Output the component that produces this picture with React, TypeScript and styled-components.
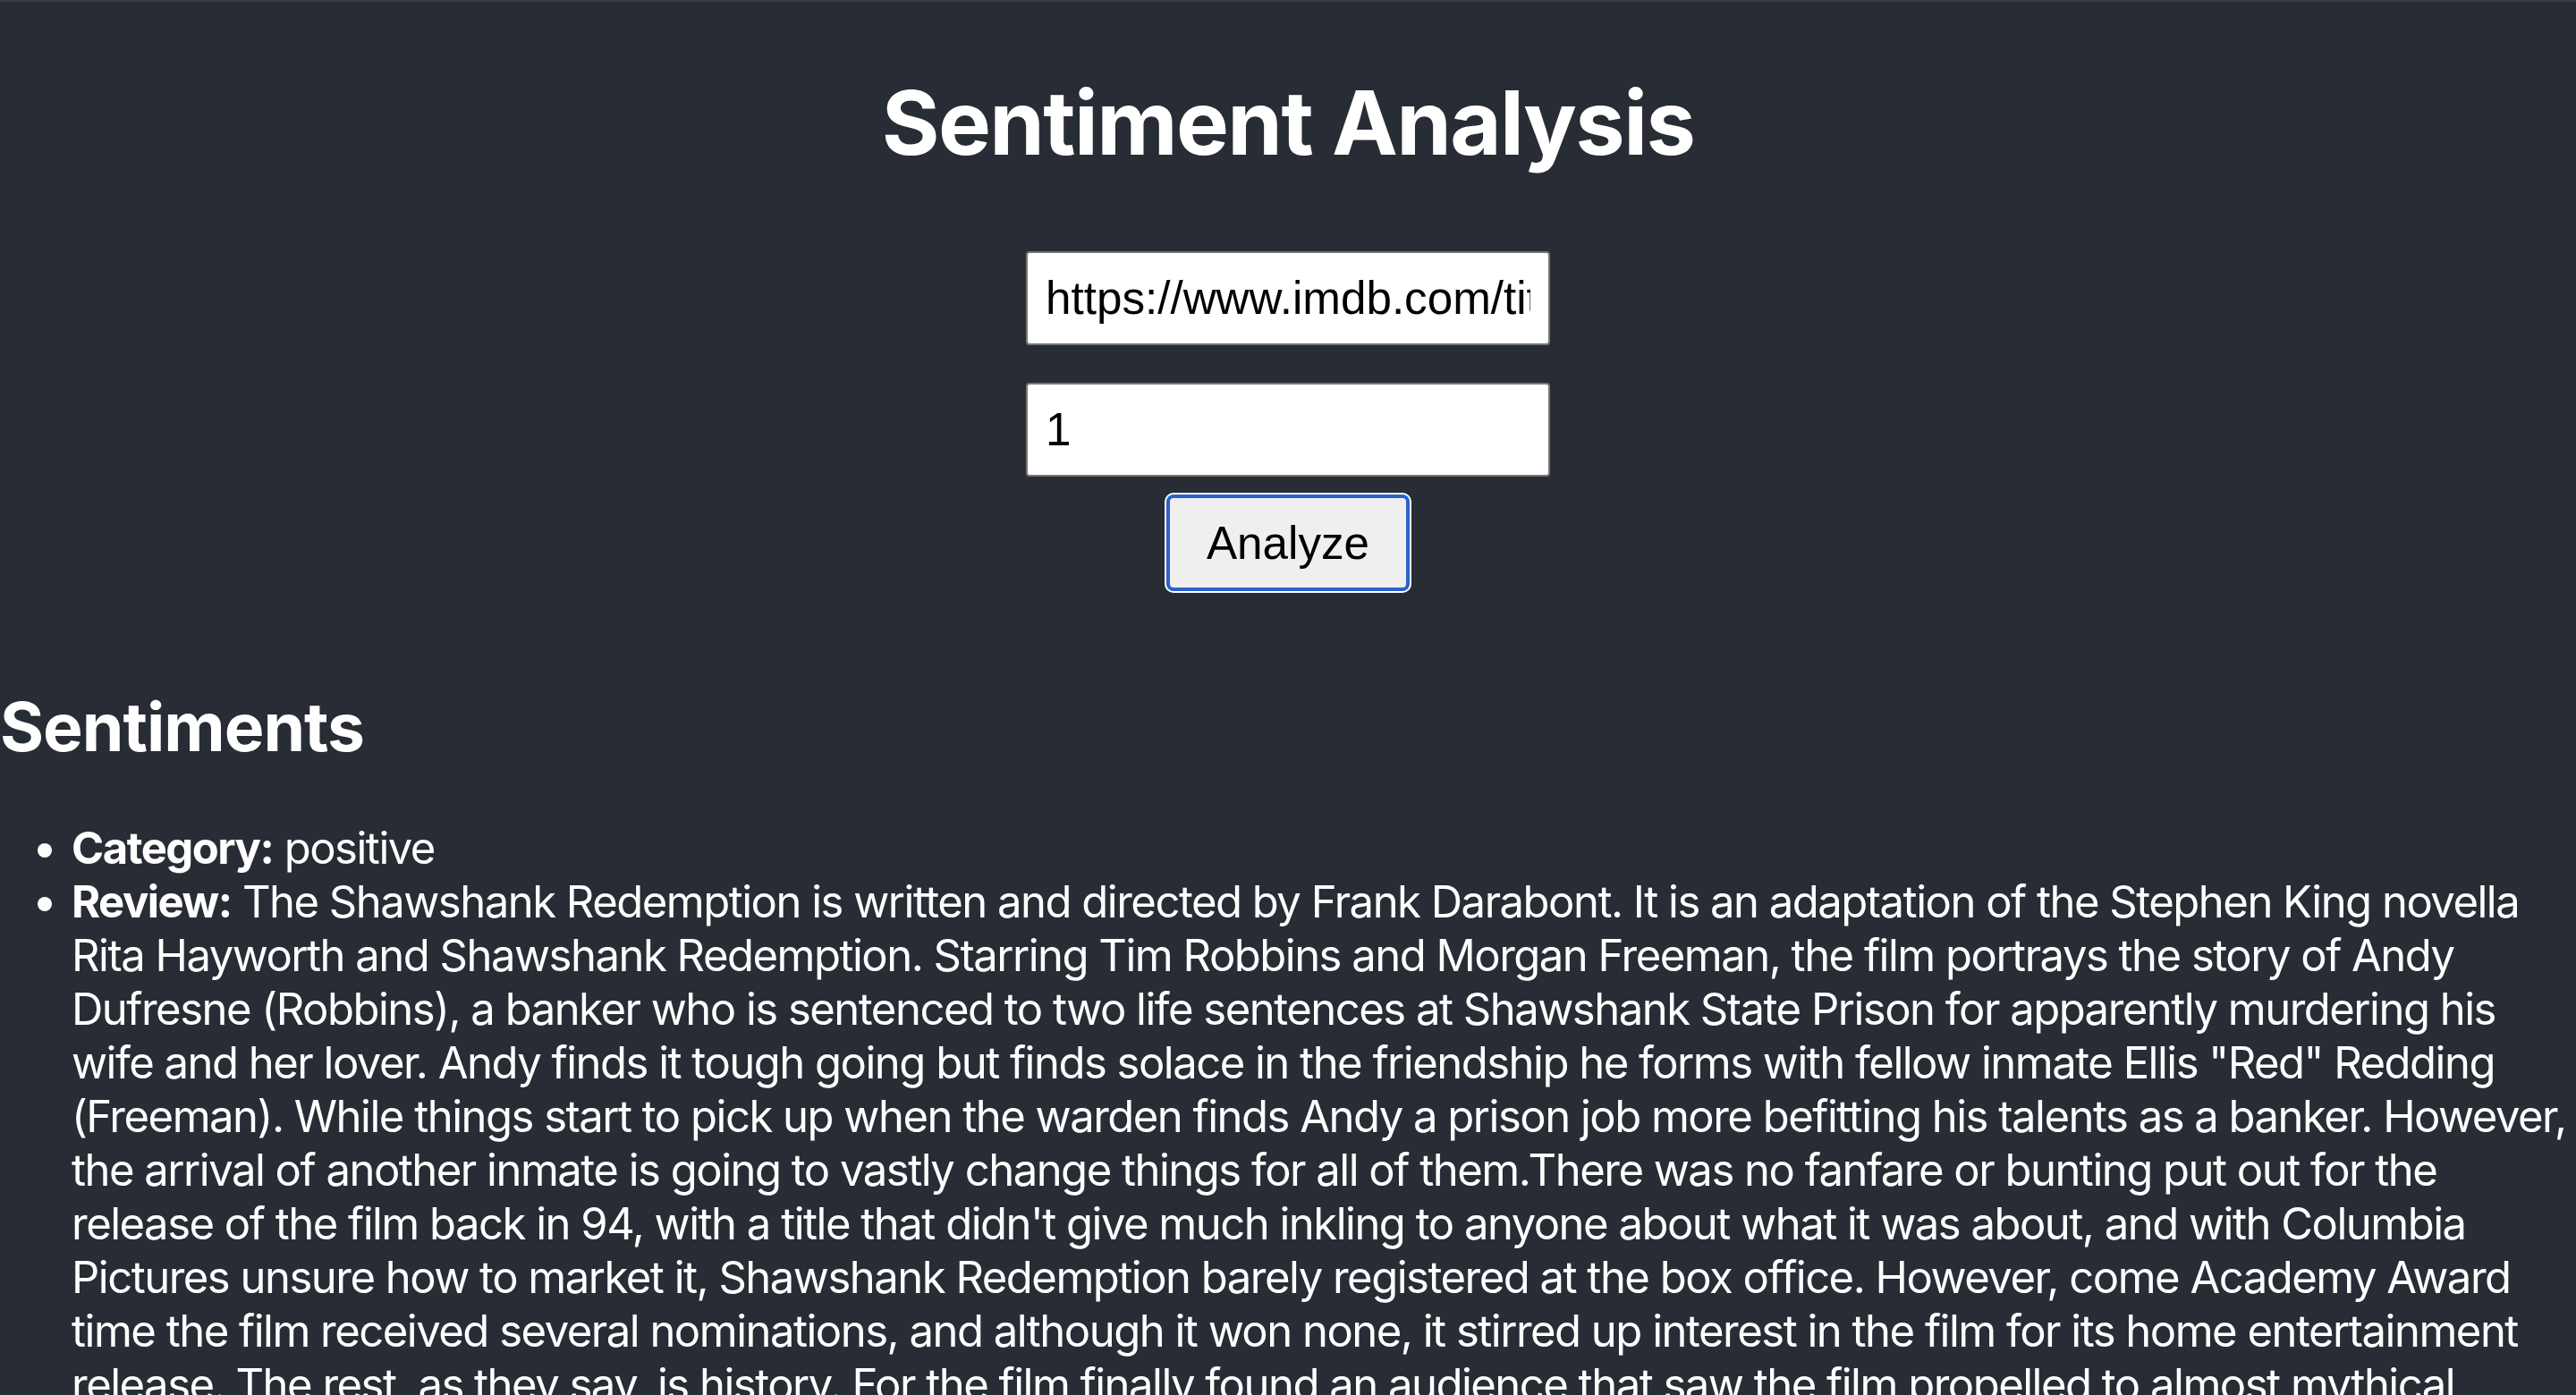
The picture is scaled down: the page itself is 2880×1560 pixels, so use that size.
import React from "react";
import styled, { createGlobalStyle } from "styled-components";

const GlobalStyle = createGlobalStyle`
  html, body {
    margin: 0;
    padding: 0;
    background: #282c34;
  }
  body {
    font-family: Inter, "Noto Sans", "Liberation Sans", sans-serif;
    -webkit-font-smoothing: antialiased;
  }
`;

const Page = styled.div`
  min-height: 100vh;
  background: #282c34;
  border-top: 2px solid #3c3d40;
  color: #ffffff;
  font-family: Inter, "Noto Sans", "Liberation Sans", sans-serif;
  font-size: 49px;
`;

const Header = styled.header`
  display: flex;
  flex-direction: column;
  align-items: center;
`;

const Title = styled.h1`
  margin: 73px 0 0;
  font-size: 99px;
  line-height: 124px;
  font-weight: 700;
  letter-spacing: -1.6px;
  text-align: center;
`;

const Form = styled.form`
  display: flex;
  flex-direction: column;
  align-items: center;
  margin-top: 82px;
`;

const TextInput = styled.input<{ $gap?: number }>`
  box-sizing: border-box;
  width: 586px;
  height: 105px;
  margin-bottom: ${(p) => p.$gap ?? 0}px;
  padding: 0 20px;
  border: 2px solid #767676;
  border-radius: 4px;
  background: #ffffff;
  color: #000000;
  font-family: "Liberation Sans", Arial, sans-serif;
  font-size: 51.2px;
  outline: none;
`;

const Button = styled.button`
  box-sizing: border-box;
  width: 272px;
  height: 108px;
  padding: 0;
  border: 4px solid #2c60cc;
  border-radius: 8px;
  box-shadow: 0 0 0 2px #ffffff;
  background: #efefef;
  color: #000000;
  font-family: "Liberation Sans", Arial, sans-serif;
  font-size: 51.2px;
  cursor: pointer;
`;

const Results = styled.section`
  margin-top: 105px;
`;

const SectionTitle = styled.h2`
  margin: 0;
  font-size: 75px;
  line-height: 93px;
  font-weight: 700;
  letter-spacing: -1px;
`;

const List = styled.ul`
  margin: 60px 0 0;
  padding: 0 0 0 80px;
  list-style: disc;
`;

const Item = styled.li`
  font-size: 49px;
  line-height: 60px;
  letter-spacing: -1.5px;
  color: #ffffff;
`;

const Label = styled.strong`
  font-weight: 700;
`;

const review =
  "The Shawshank Redemption is written and directed by Frank Darabont. It is an adaptation of the Stephen King novella Rita Hayworth and Shawshank Redemption. Starring Tim Robbins and Morgan Freeman, the film portrays the story of Andy Dufresne (Robbins), a banker who is sentenced to two life sentences at Shawshank State Prison for apparently murdering his wife and her lover. Andy finds it tough going but finds solace in the friendship he forms with fellow inmate Ellis \"Red\" Redding (Freeman). While things start to pick up when the warden finds Andy a prison job more befitting his talents as a banker. However, the arrival of another inmate is going to vastly change things for all of them.There was no fanfare or bunting put out for the release of the film back in 94, with a title that didn't give much inkling to anyone about what it was about, and with Columbia Pictures unsure how to market it, Shawshank Redemption barely registered at the box office. However, come Academy Award time the film received several nominations, and although it won none, it stirred up interest in the film for its home entertainment release. The rest, as they say, is history. For the film finally found an audience that saw the film propelled to almost mythical proportions as an endearing modern day classic. Something that has delighted its fans, whilst simultaneously baffling its detractors. One thing is for sure, though, is that which ever side of the Shawshank fence you sit on, the film continues to gather new fans and simply will never go away or loose that mythical status.";

export default function App() {
  return (
    <>
      <GlobalStyle />
      <Page>
        <Header>
          <Title>Sentiment Analysis</Title>
          <Form onSubmit={(e) => e.preventDefault()}>
            <TextInput
              type="text"
              $gap={42}
              defaultValue="https://www.imdb.com/title/tt0111161/reviews"
            />
            <TextInput type="number" $gap={20} defaultValue="1" />
            <Button type="submit">Analyze</Button>
          </Form>
        </Header>
        <Results>
          <SectionTitle>Sentiments</SectionTitle>
          <List>
            <Item>
              <Label>Category:</Label> positive
            </Item>
            <Item>
              <Label>Review:</Label> {review}
            </Item>
          </List>
        </Results>
      </Page>
    </>
  );
}
